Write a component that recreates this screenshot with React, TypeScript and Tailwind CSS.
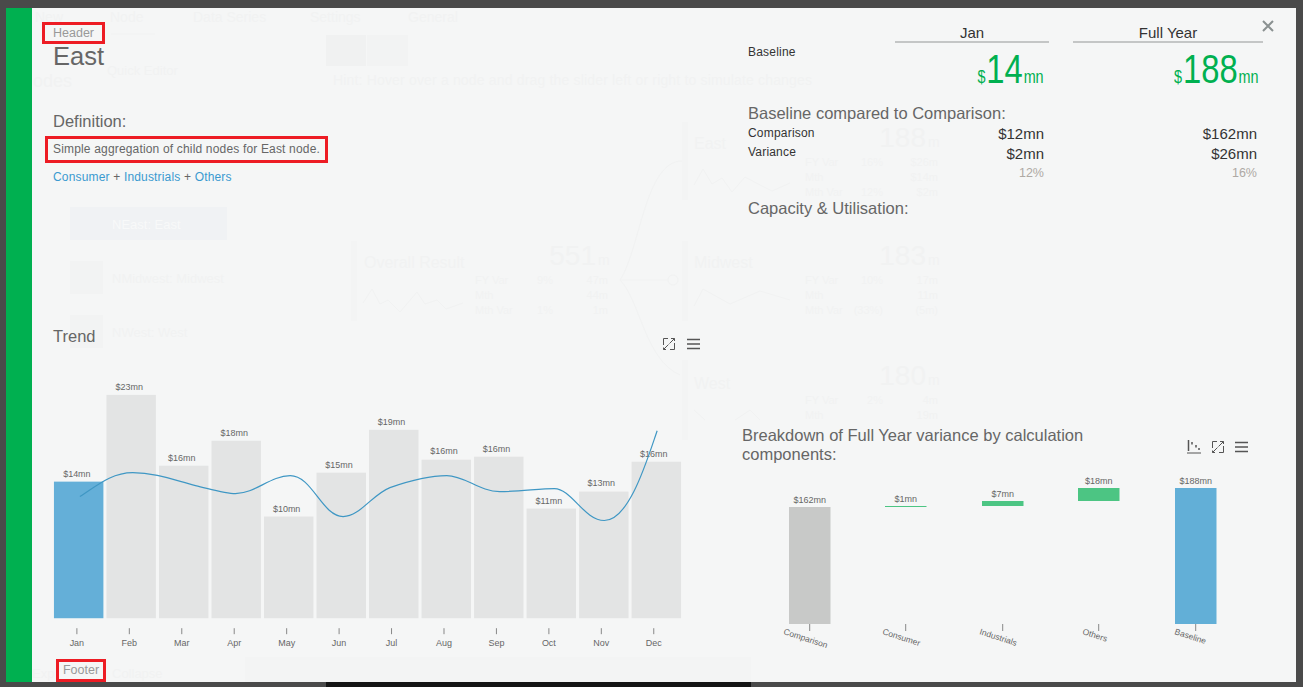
const months = [
  { m: 'Jan', top: 482, v: '$14mn', c: '#64afd8', ly: 474 },
  { m: 'Feb', top: 395, v: '$23mn', c: '#e3e4e4', ly: 387 },
  { m: 'Mar', top: 466, v: '$16mn', c: '#e3e4e4', ly: 458 },
  { m: 'Apr', top: 441, v: '$18mn', c: '#e3e4e4', ly: 433 },
  { m: 'May', top: 517, v: '$10mn', c: '#e3e4e4', ly: 509 },
  { m: 'Jun', top: 473, v: '$15mn', c: '#e3e4e4', ly: 465 },
  { m: 'Jul', top: 430, v: '$19mn', c: '#e3e4e4', ly: 422 },
  { m: 'Aug', top: 460, v: '$16mn', c: '#e3e4e4', ly: 451 },
  { m: 'Sep', top: 457, v: '$16mn', c: '#e3e4e4', ly: 449 },
  { m: 'Oct', top: 509, v: '$11mn', c: '#e3e4e4', ly: 501 },
  { m: 'Nov', top: 492, v: '$13mn', c: '#e3e4e4', ly: 483 },
  { m: 'Dec', top: 462, v: '$16mn', c: '#e3e4e4', ly: 454 },
];

const wf = [
  { x: 789, top: 507, bot: 624, c: '#c8c9c8', v: '$162mn', ly: 500, n: 'Comparison', lx: 783 },
  { x: 885, top: 506, bot: 507, c: '#4cc583', v: '$1mn', ly: 499, n: 'Consumer', lx: 882 },
  { x: 982, top: 501, bot: 506, c: '#4cc583', v: '$7mn', ly: 494, n: 'Industrials', lx: 979 },
  { x: 1078, top: 488, bot: 501, c: '#4cc583', v: '$18mn', ly: 481, n: 'Others', lx: 1082 },
  { x: 1175, top: 488, bot: 624, c: '#62afd7', v: '$188mn', ly: 481, n: 'Baseline', lx: 1174 },
];

const font = { fontFamily: '"Liberation Sans", Arial, sans-serif' };

function ExpandIcon() {
  return (
    <svg width="14" height="14" viewBox="0 0 14 14" fill="none" stroke="#555" strokeWidth="1">
      <path d="M6 1.5H1.5V8M1.5 10.5V12.5H4M8 12.5H12.5V6M12.5 4V1.5H9M12.5 1.5L7.5 6.5M1.5 12.5L6.5 7.5" />
    </svg>
  );
}

function MenuIcon() {
  return (
    <svg width="13" height="12" viewBox="0 0 13 12" fill="none" stroke="#555" strokeWidth="1.5">
      <path d="M0 1.5H13M0 6H13M0 10.5H13" />
    </svg>
  );
}

function WaterfallIcon() {
  return (
    <svg width="14" height="14" viewBox="0 0 14 14" fill="none" stroke="#555">
      <path d="M0 13H14" strokeWidth="1" />
      <path d="M1.5 0V11" strokeWidth="1.5" />
      <path d="M5 2V4.5M9 5V7.5M12 8V10" strokeWidth="1.5" />
    </svg>
  );
}

function BigValue({ value }: { value: string }) {
  return (
    <div className="flex justify-end pr-[5px] h-[48px] text-[#00b050] leading-none">
      <span className="inline-flex items-baseline origin-right scale-x-[0.8] mt-[6px]">
        <span className="text-[18px]">$</span>
        <span className="text-[41px] mx-[1px]">{value}</span>
        <span className="text-[18px]">mn</span>
      </span>
    </div>
  );
}

function GhostCard({ title, titleY, x, big, bigY, rows, spark }: { title: string; titleY: number; x: number; big: string; bigY: number; rows: string[][]; spark: string }) {
  const rx = x + 123;
  const ra = x + 256;
  return (
    <g fill="#f1f2f2" style={font}>
      <text x={x + 12} y={titleY} fontSize="16">{title}</text>
      <text x={ra - 12} y={bigY} fontSize="28" textAnchor="end">{big}</text>
      <text x={ra - 10} y={bigY} fontSize="14">m</text>
      {rows.map((r, i) => (
        <g key={r[0]} fontSize="11">
          <text x={rx} y={bigY + 19 + i * 15}>{r[0]}</text>
          <text x={rx + 78} y={bigY + 19 + i * 15} textAnchor="end">{r[1]}</text>
          <text x={ra} y={bigY + 19 + i * 15} textAnchor="end">{r[2]}</text>
        </g>
      ))}
      <path d={spark} fill="none" stroke="#f1f2f2" strokeWidth="1" />
    </g>
  );
}

function GhostLayer() {
  return (
    <svg className="absolute left-0 top-0 pointer-events-none" width="1290" height="674" viewBox="6 8 1290 674" aria-hidden="true">
      <g fill="#f1f2f2" fontSize="14" style={font}>
        <text x="35" y="22">New</text>
        <text x="110" y="22">Node</text>
        <text x="193" y="22">Data Series</text>
        <text x="310" y="22">Settings</text>
        <text x="408" y="22">General</text>
        <text x="333" y="85" textLength="479" fontSize="14">Hint: Hover over a node and drag the slider left or right to simulate changes</text>
        <text x="33" y="87" fontSize="18">odes</text>
        <text x="107" y="75" fontSize="13">Quick Editor</text>
        <text x="32" y="678" fontSize="13">Exp</text>
        <text x="112" y="678" fontSize="13">Collapse</text>
        <text x="272" y="678" fontSize="13">Lock</text>
      </g>
      <path d="M111 34H155" stroke="#f1f2f2" />
      <rect x="326" y="35" width="40" height="31" fill="#f0f1f1" />
      <rect x="367" y="35" width="41" height="31" fill="#f2f3f3" />
      <rect x="70" y="207" width="157" height="33" fill="#f0f2f4" />
      <text x="112" y="229" fontSize="13" fill="#f8f9f9" style={font}>NEast: East</text>
      <rect x="70" y="261" width="33" height="33" fill="#f2f3f3" />
      <text x="112" y="283" fontSize="13" fill="#f1f2f2" style={font}>NMidwest: Midwest</text>
      <rect x="70" y="315" width="33" height="33" fill="#f2f3f3" />
      <text x="112" y="337" fontSize="13" fill="#f1f2f2" style={font}>NWest: West</text>
      <rect x="245" y="657" width="506" height="25" fill="#f3f4f4" />
      <rect x="351" y="241" width="6" height="80" fill="#f3f4f4" />
      <rect x="682" y="122" width="6" height="78" fill="#f3f4f4" />
      <rect x="682" y="241" width="6" height="80" fill="#f3f4f4" />
      <rect x="682" y="360" width="6" height="80" fill="#f3f4f4" />
      <path d="M620 280C640 250 645 161 682 161M620 280H668M620 280C640 300 645 360 680 375" fill="none" stroke="#f1f2f2" />
      <circle cx="673" cy="280" r="5" fill="none" stroke="#f1f2f2" />
      <GhostCard title="Overall Result" titleY={268} x={352} big="551" bigY={265} rows={[['FY Var', '9%', '47m'], ['Mth', '', '44m'], ['Mth Var', '1%', '1m']]} spark="M363 303L372 289L380 304L388 300L400 312L417 292L425 304L437 300L446 309L463 303" />
      <GhostCard title="East" titleY={149} x={682} big="188" bigY={147} rows={[['FY Var', '16%', '$26m'], ['Mth', '', '$14m'], ['Mth Var', '12%', '$2m']]} spark="M694 185L703 169L712 184L722 178L732 192L745 177L760 185L772 191L790 183" />
      <GhostCard title="Midwest" titleY={268} x={682} big="183" bigY={265} rows={[['FY Var', '10%', '17m'], ['Mth', '', '11m'], ['Mth Var', '(33%)', '(5m)']]} spark="M694 306L703 289L730 304L760 291L790 300" />
      <GhostCard title="West" titleY={389} x={682} big="180" bigY={385} rows={[['FY Var', '2%', '4m'], ['Mth', '', '19m']]} spark="M694 410L705 420M735 420L750 410L760 420" />
    </svg>
  );
}

function TrendChart() {
  return (
    <svg className="block" width="640" height="300" viewBox="53 360 640 300">
      {months.map((d, i) => {
        const x = 53 + i * 52.67;
        const cx = 76 + i * 52.6;
        return (
          <g key={d.m}>
            <rect x={x} y={d.top} width="49.6" height={619 - d.top} fill={d.c} />
            <text x={cx} y={d.ly + 3} textAnchor="middle" fontSize="9" fill="#666" style={font}>{d.v}</text>
            <path d={`M${cx} 629V635`} stroke="#888" strokeWidth="1" />
            <text x={cx} y={647} textAnchor="middle" fontSize="9" fill="#666" style={font}>{d.m}</text>
          </g>
        );
      })}
      <path
        d="M79 497C95 487 110 473 132 473C155 473 175 481 195 486C212 490 225 494 235 494C255 494 270 476 290 476C312 476 322 517 343 517C360 517 372 495 390 488C410 481 430 476 447 476C465 476 480 492 500 492C520 492 540 489 555 489C572 489 585 521 605 521C630 521 648 460 658 431"
        fill="none"
        stroke="#3f97c4"
        strokeWidth="1.2"
      />
    </svg>
  );
}

function WaterfallChart() {
  return (
    <svg className="block" width="548" height="190" viewBox="742 470 548 190">
      {wf.map((d) => {
        const cx = d.x + 20.7;
        return (
          <g key={d.n}>
            <rect x={d.x} y={d.top} width="41.5" height={d.bot - d.top} fill={d.c} />
            <text x={cx} y={d.ly + 3} textAnchor="middle" fontSize="9" fill="#666" style={font}>{d.v}</text>
            <path d={`M${cx} 624V631`} stroke="#888" strokeWidth="1" />
            <text x={d.lx} y={634} fontSize="8.5" fill="#666" transform={`rotate(18 ${d.lx} 634)`} style={font}>{d.n}</text>
          </g>
        );
      })}
    </svg>
  );
}

export default function App() {
  return (
    <div className="h-[687px] w-[1303px] overflow-hidden bg-[#4a4a4a] pt-[8px] pl-[6px] relative" style={font}>
      <div className="absolute left-[326px] right-[552px] top-[682px] h-[5px] bg-[#141414]" />
      <div className="flex h-[674px] w-[1290px] bg-[#f5f6f6] relative">
        <GhostLayer />
        <div className="w-[26px] shrink-0 bg-[#00b050] relative" />

        <div className="w-[700px] shrink-0 pl-[21px] flex flex-col relative">
          <div className="mt-[14px] -ml-[11px] w-[63px] h-[22px] border-[3px] border-[#ed1c24] text-[12.5px] leading-[16px] text-[#999] pl-[8px]">Header</div>
          <h1 className="-mt-[3px] text-[25.5px] leading-[30px] text-[#666]">East</h1>
          <h2 className="mt-[40px] text-[16.5px] leading-[20px] text-[#666]">Definition:</h2>
          <div className="mt-[5px] -ml-[8px] w-[283px] h-[27px] border-[3px] border-[#ed1c24] text-[12px] leading-[21px] tracking-[0.17px] text-[#666] pl-[5px] whitespace-nowrap">
            Simple aggregation of child nodes for East node.
          </div>
          <div className="mt-[6px] text-[12px] leading-[16px] tracking-[0.17px] text-[#666]">
            <span className="text-[#3a9ad0]">Consumer</span> + <span className="text-[#3a9ad0]">Industrials</span> + <span className="text-[#3a9ad0]">Others</span>
          </div>
          <div className="mt-[141px] flex items-start w-[647px] h-[34px]">
            <h2 className="text-[16.5px] leading-[20px] text-[#666] flex-1">Trend</h2>
            <div className="flex items-center gap-[11px] mt-[11px]">
              <ExpandIcon />
              <MenuIcon />
            </div>
          </div>
          <TrendChart />
          <div className="ml-[3px] w-[50px] h-[23px] border-[3px] border-[#ed1c24] text-[12.5px] leading-[17px] text-[#999] text-center">Footer</div>
        </div>

        <div className="flex-1 pl-[16px] flex flex-col relative">
          <div className="flex mt-[17px] pl-[147px]">
            <div className="w-[154px] h-[18px] border-b-2 border-[#c4c6c6] text-center text-[15px] leading-[16px] text-[#333]">Jan</div>
            <div className="w-[190px] ml-[24px] h-[18px] border-b-2 border-[#c4c6c6] text-center text-[15px] leading-[16px] text-[#333]">Full Year</div>
          </div>
          <div className="flex h-[60px]">
            <div className="w-[147px] text-[12px] tracking-[0.2px] leading-[16px] text-[#333] mt-[1px]">Baseline</div>
            <div className="w-[154px]"><BigValue value="14" /></div>
            <div className="w-[190px] ml-[24px]"><BigValue value="188" /></div>
          </div>
          <h2 className="text-[16.5px] leading-[20px] text-[#666]">Baseline compared to Comparison:</h2>
          <div className="flex text-[#333] mt-[2px] h-[19px]">
            <div className="w-[147px] text-[12px] tracking-[0.2px] leading-[16px]">Comparison</div>
            <div className="w-[154px] pr-[5px] text-right text-[15px] leading-[18px]">$12mn</div>
            <div className="w-[190px] ml-[24px] pr-[6px] text-right text-[15px] leading-[18px]">$162mn</div>
          </div>
          <div className="flex text-[#333] h-[20px]">
            <div className="w-[147px] text-[12px] tracking-[0.2px] leading-[16px]">Variance</div>
            <div className="w-[154px] pr-[5px] text-right text-[15px] leading-[20px]">$2mn</div>
            <div className="w-[190px] ml-[24px] pr-[6px] text-right text-[15px] leading-[20px]">$26mn</div>
          </div>
          <div className="flex text-[#aea9a4] h-[16px] mt-[1px] text-[12.5px] leading-[16px]">
            <div className="w-[147px]" />
            <div className="w-[154px] pr-[5px] text-right">12%</div>
            <div className="w-[190px] ml-[24px] pr-[6px] text-right">16%</div>
          </div>
          <h2 className="mt-[17px] text-[16.5px] leading-[20px] text-[#666]">Capacity &amp; Utilisation:</h2>

          <div className="-ml-[6px] mt-[208px] flex items-start h-[44px]">
            <h2 className="w-[380px] text-[16.5px] leading-[19px] text-[#666]">Breakdown of Full Year variance by calculation components:</h2>
            <div className="ml-[65px] mt-[14px] flex items-center gap-[10px]">
              <WaterfallIcon />
              <ExpandIcon />
              <MenuIcon />
            </div>
          </div>
          <div className="-ml-[6px]"><WaterfallChart /></div>
        </div>

        <button className="absolute left-[1256px] top-[12px] w-[12px] h-[12px]" aria-label="Close">
          <svg width="12" height="12" viewBox="0 0 12 12" stroke="#8a9191" strokeWidth="2" fill="none"><path d="M1 1L11 11M11 1L1 11" /></svg>
        </button>
      </div>
    </div>
  );
}
